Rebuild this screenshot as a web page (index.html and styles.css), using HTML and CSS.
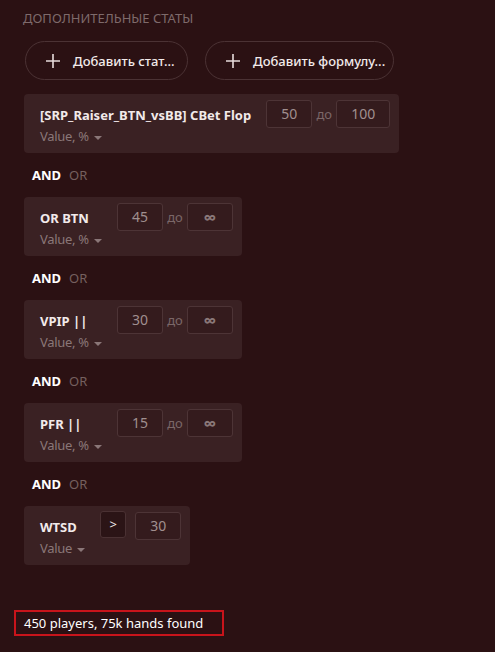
FILE: index.html
```html
<!DOCTYPE html>
<html lang="ru">
<head>
    <meta charset="UTF-8">
    <meta name="viewport" content="width=device-width, initial-scale=1.0">
    <title>Дополнительные статы</title>
    <link rel="stylesheet" href="styles.css">
</head>
<body>
    <div class="panel">
        <h3 class="title">Дополнительные статы</h3>

        <div class="actions">
            <button class="add-btn add-stat">
                <svg class="plus" width="14" height="14" viewBox="0 0 14 14"><path d="M7 0v14M0 7h14" stroke="#e8dcdc" stroke-width="1.6"/></svg>
                Добавить стат...
            </button>
            <button class="add-btn add-formula">
                <svg class="plus" width="14" height="14" viewBox="0 0 14 14"><path d="M7 0v14M0 7h14" stroke="#e8dcdc" stroke-width="1.6"/></svg>
                Добавить формулу...
            </button>
        </div>

        <div class="filters">
            <div class="stat">
                <div class="stat-info">
                    <div class="stat-name">[SRP_Raiser_BTN_vsBB] CBet Flop</div>
                    <div class="stat-type">Value, % <span class="caret"></span></div>
                </div>
                <div class="range">
                    <div class="field">50</div>
                    <span class="to">до</span>
                    <div class="field">100</div>
                </div>
            </div>

            <div class="logic"><b>AND</b><span>OR</span></div>

            <div class="stat">
                <div class="stat-info">
                    <div class="stat-name">OR BTN</div>
                    <div class="stat-type">Value, % <span class="caret"></span></div>
                </div>
                <div class="range">
                    <div class="field">45</div>
                    <span class="to">до</span>
                    <div class="field inf">∞</div>
                </div>
            </div>

            <div class="logic"><b>AND</b><span>OR</span></div>

            <div class="stat">
                <div class="stat-info">
                    <div class="stat-name">VPIP ||</div>
                    <div class="stat-type">Value, % <span class="caret"></span></div>
                </div>
                <div class="range">
                    <div class="field">30</div>
                    <span class="to">до</span>
                    <div class="field inf">∞</div>
                </div>
            </div>

            <div class="logic"><b>AND</b><span>OR</span></div>

            <div class="stat">
                <div class="stat-info">
                    <div class="stat-name">PFR ||</div>
                    <div class="stat-type">Value, % <span class="caret"></span></div>
                </div>
                <div class="range">
                    <div class="field">15</div>
                    <span class="to">до</span>
                    <div class="field inf">∞</div>
                </div>
            </div>

            <div class="logic"><b>AND</b><span>OR</span></div>

            <div class="stat">
                <div class="stat-info">
                    <div class="stat-name">WTSD</div>
                    <div class="stat-type">Value <span class="caret"></span></div>
                </div>
                <div class="range">
                    <div class="op">&gt;</div>
                    <div class="field">30</div>
                </div>
            </div>
        </div>

        <div class="found">450 players, 75k hands found</div>
    </div>
</body>
</html>
```

FILE: styles.css
```css
body {
    margin: 0;
    background: #2b1113;
    font-family: "Noto Sans", "Open Sans", sans-serif;
    font-size: 13px;
    color: #f2eaea;
}
.panel {
    padding: 8px 0 0 24px;
    height: 644px;
    position: relative;
}
.title {
    margin: 0 0 0 -1px;
    font-size: 13px;
    font-weight: 400;
    color: #7e6a6b;
    text-transform: uppercase;
    line-height: 20px;
}
.actions {
    display: flex;
    gap: 17px;
    margin-top: 13px;
    margin-left: 1px;
}
.add-btn {
    display: flex;
    align-items: center;
    gap: 13px;
    height: 39px;
    padding: 0 0 0 20px;
    background: transparent;
    border: 1px solid #4b3234;
    border-radius: 20px;
    color: #f2eaea;
    font-family: inherit;
    font-size: 13px;
    font-weight: 500;
    cursor: pointer;
}
.add-stat {
    width: 163px;
}
.add-formula {
    width: 189px;
}
.filters {
    margin-top: 14px;
    display: flex;
    flex-direction: column;
    align-items: flex-start;
}
.stat {
    display: flex;
    gap: 15px;
    height: 59px;
    box-sizing: border-box;
    padding: 6px 9px 0 16px;
    background: #3a2123;
    border-radius: 4px;
}
.stat-info {
    display: flex;
    flex-direction: column;
}
.stat-name {
    margin-top: 5px;
    font-weight: 700;
    line-height: 20px;
    white-space: nowrap;
}
.stat-type {
    margin-top: 1px;
    color: #8a7778;
    line-height: 20px;
    letter-spacing: -0.3px;
    white-space: nowrap;
}
.caret {
    display: inline-block;
    margin-left: 2px;
    vertical-align: middle;
    border-left: 4px solid transparent;
    border-right: 4px solid transparent;
    border-top: 4px solid #8a7778;
}
.range {
    display: flex;
    align-items: flex-start;
}
.field {
    min-width: 46px;
    height: 28px;
    box-sizing: border-box;
    padding: 0 14px;
    border: 1px solid #4d3436;
    border-radius: 3px;
    background: #341b1d;
    color: #a08f8f;
    font-size: 14px;
    line-height: 26px;
    text-align: center;
}
.field.inf {
    font-size: 18px;
    font-weight: 700;
    color: #8a7878;
}
.to {
    width: 24px;
    text-align: center;
    color: #7b6768;
    line-height: 28px;
}
.op {
    width: 26px;
    height: 27px;
    margin: -1px 9px 0 0;
    box-sizing: border-box;
    border: 1px solid #4a3133;
    border-radius: 3px;
    background: #2b1416;
    color: #f2eaea;
    text-align: center;
    line-height: 25px;
}
.logic {
    display: flex;
    gap: 8px;
    height: 44px;
    align-items: center;
    padding-left: 8px;
}
.logic b {
    color: #fff;
}
.logic span {
    color: #75605f;
}
.found {
    position: absolute;
    left: 14px;
    top: 610px;
    width: 210px;
    height: 26px;
    box-sizing: border-box;
    padding-left: 8px;
    border: 2px solid #c8141b;
    color: #fff;
    line-height: 22px;
}
```
